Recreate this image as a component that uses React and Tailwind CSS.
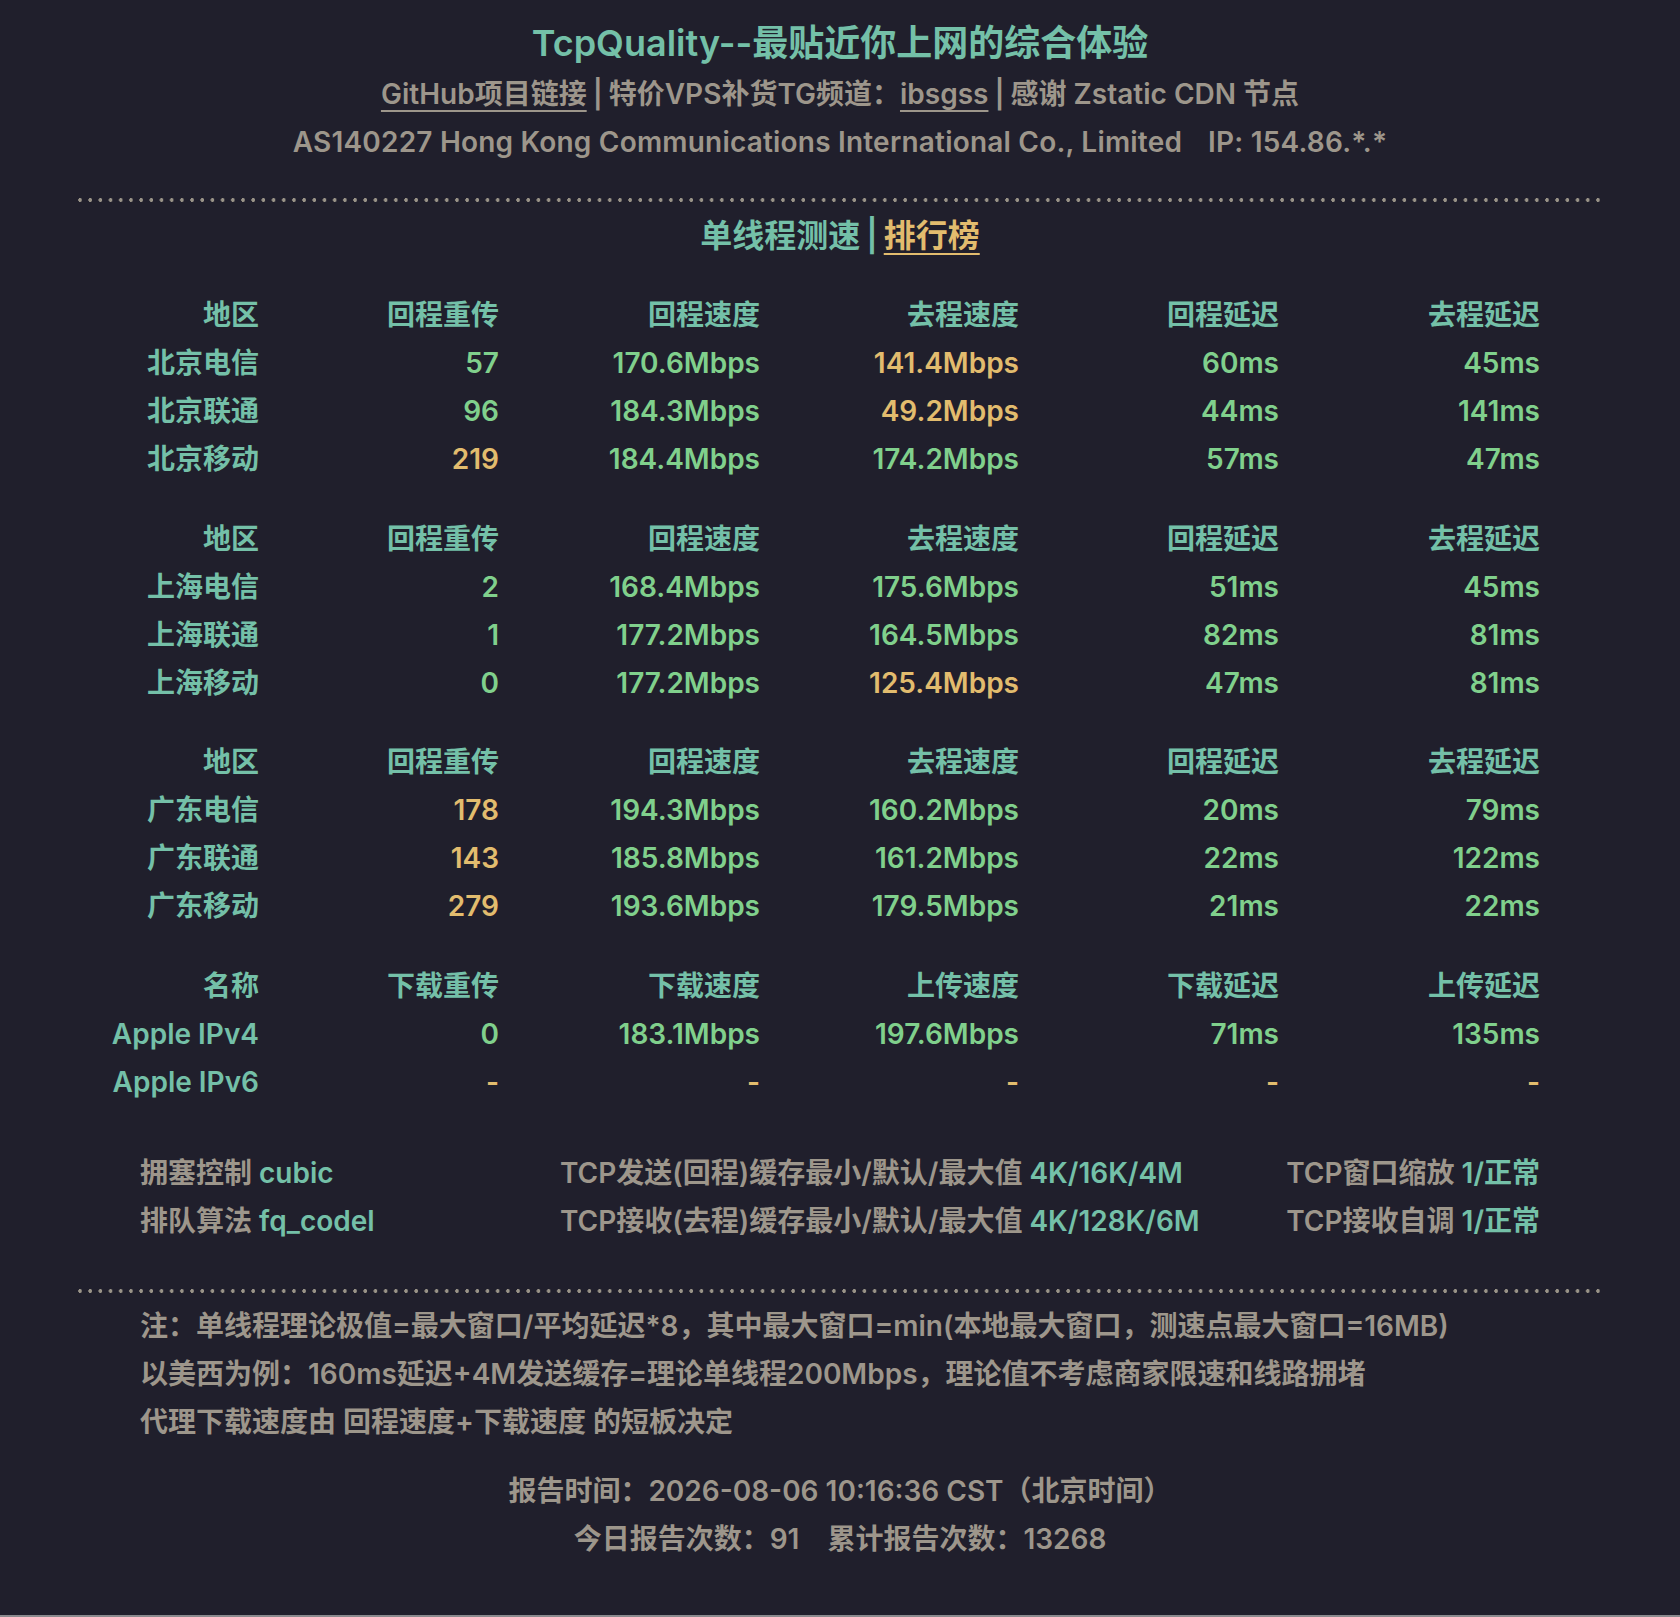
import React from "react";

const T = "text-[#74c0a8]";
const G = "text-[#80d08c]";
const Y = "text-[#e2bc6e]";
const GR = "text-[#9d968b]";

const groups = [
  {
    head: ["地区", "回程重传", "回程速度", "去程速度", "回程延迟", "去程延迟"],
    rows: [
      ["北京电信", ["57", G], ["170.6Mbps", G], ["141.4Mbps", Y], ["60ms", G], ["45ms", G]],
      ["北京联通", ["96", G], ["184.3Mbps", G], ["49.2Mbps", Y], ["44ms", G], ["141ms", G]],
      ["北京移动", ["219", Y], ["184.4Mbps", G], ["174.2Mbps", G], ["57ms", G], ["47ms", G]],
    ],
  },
  {
    head: ["地区", "回程重传", "回程速度", "去程速度", "回程延迟", "去程延迟"],
    rows: [
      ["上海电信", ["2", G], ["168.4Mbps", G], ["175.6Mbps", G], ["51ms", G], ["45ms", G]],
      ["上海联通", ["1", G], ["177.2Mbps", G], ["164.5Mbps", G], ["82ms", G], ["81ms", G]],
      ["上海移动", ["0", G], ["177.2Mbps", G], ["125.4Mbps", Y], ["47ms", G], ["81ms", G]],
    ],
  },
  {
    head: ["地区", "回程重传", "回程速度", "去程速度", "回程延迟", "去程延迟"],
    rows: [
      ["广东电信", ["178", Y], ["194.3Mbps", G], ["160.2Mbps", G], ["20ms", G], ["79ms", G]],
      ["广东联通", ["143", Y], ["185.8Mbps", G], ["161.2Mbps", G], ["22ms", G], ["122ms", G]],
      ["广东移动", ["279", Y], ["193.6Mbps", G], ["179.5Mbps", G], ["21ms", G], ["22ms", G]],
    ],
  },
  {
    head: ["名称", "下载重传", "下载速度", "上传速度", "下载延迟", "上传延迟"],
    rows: [
      ["Apple IPv4", ["0", G], ["183.1Mbps", G], ["197.6Mbps", G], ["71ms", G], ["135ms", G]],
      ["Apple IPv6", ["-", Y], ["-", Y], ["-", Y], ["-", Y], ["-", Y]],
    ],
  },
];

function Dots() {
  return (
    <div className="h-[4px] w-full bg-[radial-gradient(ellipse_1.8px_2.4px_at_2px_2px,#9a9488_85%,transparent_100%)] bg-[length:10.2px_4px] bg-repeat-x" />
  );
}

function Grid({ children }) {
  return (
    <div className="grid grid-cols-[181px_240px_261px_259px_260px_261px] text-right leading-[48px]">
      {children}
    </div>
  );
}

export default function App() {
  return (
    <div className="min-h-[1617px] w-full bg-[#201f2c] border-b-2 border-[#8a8a8e] font-[Inter,'Noto_Sans_CJK_SC',sans-serif] font-semibold text-[28px]">
      <div className="pt-[19px] text-center">
        <div className={`text-[36px] leading-[48px] ${T}`}>TcpQuality--最贴近你上网的综合体验</div>
        <div className={`leading-[48px] mt-[3px] ${GR}`}>
          <span className="underline decoration-2 underline-offset-[6px]">GitHub项目链接</span>
          <span className="mx-[6px]">|</span>
          <span>特价VPS补货TG频道：</span>
          <span className="underline decoration-2 underline-offset-[6px]">ibsgss</span>
          <span className="mx-[6px]">|</span>
          <span>感谢 Zstatic CDN 节点</span>
        </div>
        <div className={`leading-[48px] tracking-[0.2px] ${GR}`}>
          <span>AS140227 Hong Kong Communications International Co., Limited</span>
          <span className="ml-[26px]">IP: 154.86.*.*</span>
        </div>
      </div>

      <div className="mx-[78px]">
        <div className="mt-[32px]">
          <Dots />
        </div>

        <div className="mt-[10px] text-center text-[32px] leading-[48px]">
          <span className={T}>单线程测速</span>
          <span className={`${T} mx-[6px]`}>|</span>
          <span className={`${Y} underline decoration-2 underline-offset-[6px]`}>排行榜</span>
        </div>

        <div className="mt-[31px] flex flex-col gap-[31.5px]">
          {groups.map((g, gi) => (
            <Grid key={gi}>
              {g.head.map((h, i) => (
                <div key={"h" + i} className={T}>{h}</div>
              ))}
              {g.rows.map((r, ri) => (
                <React.Fragment key={ri}>
                  <div className={T}>{r[0]}</div>
                  {r.slice(1).map(([v, c], ci) => (
                    <div key={ci} className={c}>{v}</div>
                  ))}
                </React.Fragment>
              ))}
            </Grid>
          ))}
        </div>

        <div className={`mt-[43px] px-[62px] grid grid-cols-[420px_1fr_auto] leading-[48px] ${GR}`}>
          <div>拥塞控制 <span className={T}>cubic</span></div>
          <div>TCP发送(回程)缓存最小/默认/最大值 <span className={T}>4K/16K/4M</span></div>
          <div>TCP窗口缩放 <span className={T}>1/正常</span></div>
          <div>排队算法 <span className={T}>fq_codel</span></div>
          <div>TCP接收(去程)缓存最小/默认/最大值 <span className={T}>4K/128K/6M</span></div>
          <div>TCP接收自调 <span className={T}>1/正常</span></div>
        </div>

        <div className="mt-[44px]">
          <Dots />
        </div>

        <div className={`mt-[9px] px-[62px] leading-[48px] ${GR}`}>
          <div>注：单线程理论极值=最大窗口/平均延迟*8，其中最大窗口=min(本地最大窗口，测速点最大窗口=16MB)</div>
          <div>以美西为例：160ms延迟+4M发送缓存=理论单线程200Mbps，理论值不考虑商家限速和线路拥堵</div>
          <div>代理下载速度由 回程速度+下载速度 的短板决定</div>
        </div>

        <div className={`mt-[21px] text-center leading-[48px] ${GR}`}>
          <div>报告时间：2026-08-06 10:16:36 CST（北京时间）</div>
          <div>
            今日报告次数：91<span className="ml-[28px]">累计报告次数：13268</span>
          </div>
        </div>
      </div>
    </div>
  );
}
